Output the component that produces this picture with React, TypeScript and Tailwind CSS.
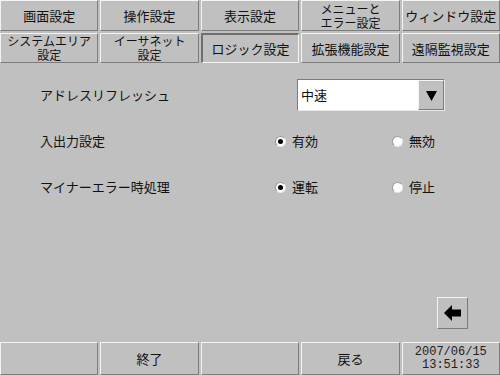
import React from 'react'

const font = { fontFamily: '"Noto Sans CJK JP", "Noto Sans", sans-serif' }

const raised =
  'border border-t-[#f4f4f4] border-l-[#f4f4f4] border-r-[#7c7c7c] border-b-[#7c7c7c] bg-[#c0c0c0]'

const Tab: React.FC<{ lines: string[]; active?: boolean }> = ({ lines, active }) => (
  <div
    className={
      active
        ? 'flex flex-col items-center justify-center border-t-2 border-l-2 border-r border-t-[#6e6e6e] border-l-[#6e6e6e] border-r-[#f4f4f4] bg-[#c0c0c0] border-b border-b-[#f4f4f4]'
        : `flex flex-col items-center justify-center ${raised}`
    }
  >
    {lines.map((l) => (
      <span
        key={l}
        className={
          lines.length > 1
            ? 'text-[12px] leading-[14px] text-[#111]'
            : 'text-[13px] leading-[15px] text-[#111]'
        }
      >
        {l}
      </span>
    ))}
  </div>
)

const Radio: React.FC<{ label: string; checked?: boolean }> = ({ label, checked }) => (
  <div className="flex items-center gap-[6px]">
    <div className="flex h-[11px] w-[11px] items-center justify-center rounded-full border border-t-[#9a9a9a] border-l-[#9a9a9a] border-r-[#e8e8e8] border-b-[#e8e8e8] bg-white">
      {checked && <div className="h-[5px] w-[5px] rounded-full bg-black" />}
    </div>
    <span className="text-[13px] text-[#111]">{label}</span>
  </div>
)

export default function App() {
  const row1 = [['画面設定'], ['操作設定'], ['表示設定'], ['メニューと', 'エラー設定'], ['ウィンドウ設定']]
  const row2 = [['システムエリア', '設定'], ['イーサネット', '設定'], ['ロジック設定'], ['拡張機能設定'], ['遠隔監視設定']]

  return (
    <div className="flex h-[375px] w-[500px] flex-col overflow-hidden bg-[#c0c0c0]" style={font}>
      <div className="grid h-[31px] grid-cols-5 gap-x-[2px]">
        {row1.map((l) => (
          <Tab key={l.join()} lines={l} />
        ))}
      </div>
      <div className="mt-[2px] grid h-[30px] grid-cols-5 gap-x-[2px]">
        {row2.map((l, i) => (
          <Tab key={l.join()} lines={l} active={i === 2} />
        ))}
      </div>

      <div className="flex flex-1 flex-col pt-[9px]">
        <div className="flex h-[46px] items-center">
          <span className="w-[297px] pl-[40px] text-[13px] text-[#111]">アドレスリフレッシュ</span>
          <div className="flex h-[32px] w-[148px] border border-t-[#7c7c7c] border-l-[#7c7c7c] border-r-[#e8e8e8] border-b-[#e8e8e8] bg-white">
            <span className="flex-1 pl-[3px] text-[13px] leading-[30px] text-[#111]">中速</span>
            <div className={`flex w-[26px] items-center justify-center ${raised}`}>
              <svg width="13" height="13" viewBox="0 0 13 13">
                <polygon points="1,2 12,2 6.5,12" fill="#000" />
              </svg>
            </div>
          </div>
        </div>
        <div className="flex h-[46px] items-center">
          <span className="w-[275px] pl-[40px] text-[13px] text-[#111]">入出力設定</span>
          <div className="w-[117px]">
            <Radio label="有効" checked />
          </div>
          <Radio label="無効" />
        </div>
        <div className="flex h-[46px] items-center">
          <span className="w-[275px] pl-[40px] text-[13px] text-[#111]">マイナーエラー時処理</span>
          <div className="w-[117px]">
            <Radio label="運転" checked />
          </div>
          <Radio label="停止" />
        </div>

        <div className="flex-1" />
        <div className="mb-[13px] flex justify-end pr-[32px]">
          <div className={`flex h-[32px] w-[31px] items-center justify-center ${raised}`}>
            <svg width="18" height="16" viewBox="0 0 18 16">
              <polygon points="0,8 8,0 8,4.5 17,4.5 17,11.5 8,11.5 8,16" fill="#000" />
            </svg>
          </div>
        </div>
      </div>

      <div className="grid h-[33px] grid-cols-5 gap-x-[2px]">
        <div className={raised} />
        <div className={`flex items-center justify-center text-[13px] text-[#111] ${raised}`}>終了</div>
        <div className={raised} />
        <div className={`flex items-center justify-center text-[13px] text-[#111] ${raised}`}>戻る</div>
        <div
          className={`flex flex-col items-center justify-center text-[12px] leading-[13px] text-[#222] ${raised}`}
          style={{ fontFamily: '"Liberation Mono", monospace' }}
        >
          <span>2007/06/15</span>
          <span>13:51:33</span>
        </div>
      </div>
    </div>
  )
}
